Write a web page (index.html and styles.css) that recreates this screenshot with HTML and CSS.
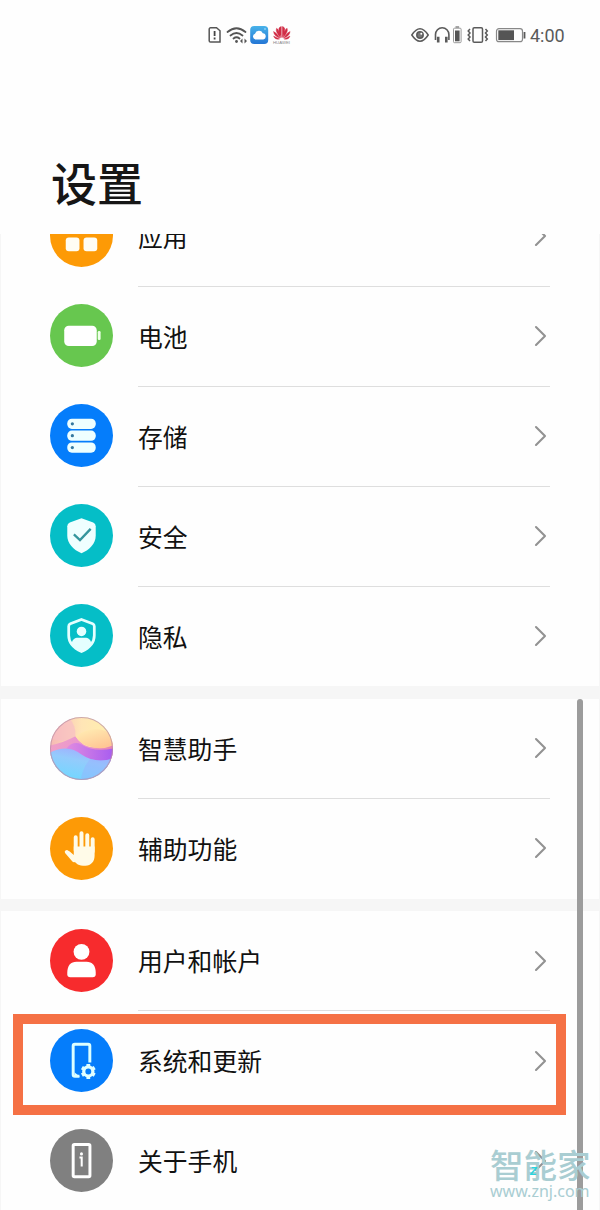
FILE: index.html
```html
<!DOCTYPE html>
<html lang="zh-CN">
<head>
<meta charset="utf-8">
<title>设置</title>
<link rel="stylesheet" href="styles.css">
</head>
<body>
<div class="phone">
  <header class="status">
    <div class="status-left">
      <svg width="84" height="22" viewBox="0 0 84 22">
        <defs><linearGradient id="cloud" x1="0" y1="0" x2="0" y2="1"><stop offset="0" stop-color="#48b2e9"/><stop offset="1" stop-color="#2476d5"/></linearGradient></defs>
        <path d="M3.500 3.800h6l3.500 3v11.200h-9.500a1.300 1.300 0 0 1-1.300-1.300V5.100a1.300 1.300 0 0 1 1.300-1.300z" fill="none" stroke="#555" stroke-width="1.500"/>
        <path d="M7.600 7v5M7.600 13.500v2" stroke="#444" stroke-width="1.800"/>
        <g fill="none" stroke="#555" stroke-width="1.700" stroke-linecap="round"><path d="M20.500 8q9-7.500 18 0M23.500 11.500q6-5 12 0M26.500 14.500q3-2.500 6 0"/></g>
        <circle cx="29.500" cy="17.500" r="1.400" fill="#555"/><path d="M35.500 14.500v5l-2.500-2.500zM37.500 14.500v5l2.500-2.500z" fill="#555"/>
        <rect x="43.200" y="2" width="18" height="18" rx="4" fill="url(#cloud)"/>
        <path d="M48.500 15.500a3 3 0 0 1-.5-5.800 4.200 4.200 0 0 1 7.800-.5 3.200 3.200 0 0 1 .5 6.300z" fill="#fff"/><circle cx="58" cy="5" r=".8" fill="#bce8ff"/>
        <g fill="#d12d46" stroke="#d12d46" stroke-width=".4"><path d="M74.300 13.500Q71 7 72 4q1-1.300 2.300-1.500zM75.300 13.500Q78.600 7 77.600 4q-1-1.300-2.300-1.500zM73.500 13.700Q68 8 69.500 4.300 72 5 73.500 13.700zM76.100 13.700Q81.600 8 80.100 4.300 77.600 5 76.100 13.700zM73 14.200Q67 12 66.500 7.500 69.500 8.500 73 14.200zM76.600 14.200Q82.600 12 83.100 7.500 80.100 8.500 76.600 14.200zM72.500 15Q68 16 66.600 12zM77.100 15q4.500 1 5.900-3z"/></g>
        <text x="66" y="20" font-size="4.300" textLength="17" class="tiny">HUAWEI</text>
      </svg>
    </div>
    <div class="status-right">
      <svg width="118" height="22" viewBox="0 0 118 22" fill="none" stroke="#5a5a5a" stroke-width="1.500">
        <path d="M1.800 11q8.200-12.500 16.400 0-8.200 12.500-16.400 0z"/><circle cx="10" cy="11" r="3.200" fill="#777"/><circle cx="11.300" cy="9.700" r="1" fill="#fff" stroke="none"/>
        <path d="M25.500 16V10.500a6.700 6.700 0 0 1 13.400 0V16" stroke-width="1.600"/><path d="M28.200 12.800v5.700M36.300 12.800v5.700" stroke-width="2.600"/>
        <rect x="43.500" y="4.200" width="7.600" height="14.500" rx="1" stroke="#999" stroke-width="1"/><path d="M45.500 3h3.600" stroke="#888"/><path d="M45 6.500h4.600v10.800H45z" fill="#555" stroke="none"/>
        <rect x="63" y="3.700" width="9.500" height="14.600" rx="1.300"/><path d="M60 5l-1.800 2 1.800 2-1.800 2 1.800 2-1.800 2 1.800 2M75.500 5l1.800 2-1.800 2 1.800 2-1.800 2 1.800 2-1.800 2" stroke-width="1.500"/>
        <rect x="86.500" y="4.700" width="26" height="13" rx="2.500" stroke="#888" stroke-width="1.200"/><path d="M88.300 6.300H104v9.800H88.300z" fill="#555" stroke="none"/><path d="M114.500 8v6.500" stroke-width="1.800"/>
      </svg>
      <span class="clock">4:00</span>
    </div>
  </header>
  <h1 class="title">设置</h1>

  <svg class="defs" width="0" height="0"><defs>
    <symbol id="chev" viewBox="0 0 14 22"><path d="M2 2l9 9-9 9" fill="none" stroke="#929292" stroke-width="2.100" stroke-linecap="round" stroke-linejoin="round"/></symbol>
  </defs></svg>

  <main class="list">
    <section class="group first">
      <div class="row"><svg class="icon" viewBox="0 0 62 62"><circle cx="31" cy="31" r="31" fill="#fd9a06"/><g fill="#fffdf4"><rect x="15.500" y="15" width="13.500" height="13.500" rx="3"/><rect x="33" y="15" width="13.500" height="13.500" rx="3"/><rect x="15.500" y="33" width="13.500" height="13.500" rx="3"/><rect x="33" y="33" width="13.500" height="13.500" rx="3"/></g></svg><div class="body"><span>应用</span><svg class="chev"><use href="#chev"/></svg></div></div>
      <div class="row"><svg class="icon" viewBox="0 0 62 62"><circle cx="31" cy="31" r="31" fill="#67c74f"/><rect x="14" y="21.300" width="32" height="20" rx="4.500" fill="#fff"/><rect x="47" y="26.500" width="2.800" height="9" rx="1.200" fill="#efffe9"/></svg><div class="body"><span>电池</span><svg class="chev"><use href="#chev"/></svg></div></div>
      <div class="row"><svg class="icon" viewBox="0 0 62 62"><circle cx="31" cy="31" r="31" fill="#057dfb"/><g fill="#eeffff"><rect x="17" y="14.500" width="28" height="10" rx="4.500"/><rect x="17" y="26.200" width="28" height="10" rx="4.500"/><rect x="17" y="37.900" width="28" height="10" rx="4.500"/></g><g fill="#34799f"><circle cx="22" cy="19.500" r="1.600"/><circle cx="22" cy="31.200" r="1.600"/><circle cx="22" cy="42.900" r="1.600"/></g></svg><div class="body"><span>存储</span><svg class="chev"><use href="#chev"/></svg></div></div>
      <div class="row"><svg class="icon" viewBox="0 0 62 62"><circle cx="31" cy="31" r="31" fill="#05bec7"/><path d="M31 14l11.500 4.300Q45 19.300 45 22v9c0 8-6 14-14 17.500C23 45 17 39 17 31v-9q0-2.700 2.500-3.700z" fill="#efffff"/><path d="M23.500 30l6 5.500L40 24.500" fill="none" stroke="#35969d" stroke-width="2.300"/></svg><div class="body"><span>安全</span><svg class="chev"><use href="#chev"/></svg></div></div>
      <div class="row"><svg class="icon" viewBox="0 0 62 62"><circle cx="31" cy="31" r="31" fill="#05bec7"/><path d="M31 15.300l11 4.200q1.600.7 1.600 2.500v9c0 7.500-5.500 12.600-12.600 15.800-7.100-3.200-12.600-8.300-12.600-15.800v-9q0-1.800 1.600-2.500z" fill="none" stroke="#e4ffff" stroke-width="2.700"/><circle cx="31" cy="27" r="4.700" fill="#e4ffff"/><path d="M21.500 39c0-4 3-5.800 6-5.800h7c3 0 6 1.800 6 5.800-2.500 4-5.500 6-9.500 7.500-4-1.500-7-3.500-9.500-7.500z" fill="#e4ffff"/></svg><div class="body"><span>隐私</span><svg class="chev"><use href="#chev"/></svg></div></div>
    </section>
    <section class="group">
      <div class="row"><svg class="icon" viewBox="0 0 62 62">
        <defs><clipPath id="orb"><circle cx="31" cy="31" r="31"/></clipPath>
        <linearGradient id="o1"><stop offset="0" stop-color="#f6b9b5"/><stop offset=".5" stop-color="#ffe5b6"/><stop offset="1" stop-color="#fff1ac"/></linearGradient>
        <linearGradient id="o2" x1="0" y1="0" x2=".6" y2="1"><stop offset="0" stop-color="#ffefb5"/><stop offset="1" stop-color="#ffc795"/></linearGradient>
        <linearGradient id="o3"><stop offset="0" stop-color="#efa0c6"/><stop offset=".5" stop-color="#ea96cf"/><stop offset="1" stop-color="#e583b4"/></linearGradient>
        <linearGradient id="o5"><stop offset="0" stop-color="#e08be0"/><stop offset="1" stop-color="#a85df0"/></linearGradient>
        <linearGradient id="o4" x1=".3" y1="1" x2=".7" y2="0"><stop offset="0" stop-color="#70d8ff"/><stop offset=".6" stop-color="#94cbfc"/><stop offset="1" stop-color="#a4a8ff"/></linearGradient></defs>
        <g clip-path="url(#orb)"><path fill="url(#o1)" d="M0 0h62v62H0z"/><path d="M0 0h18q8 8 7 19-10 8-25 2z" fill="#f8bdc6" opacity=".65"/><path d="M0 28q12-2 25-9 7 11 19 11 12 0 18-5v37H0z" fill="url(#o3)"/><path d="M25 19Q43 6 62 17v11q-10 4-19 2-13-2-18-11z" fill="url(#o2)"/><path d="M16 31q7-8 15-4 12 8 31 4v15H35z" fill="url(#o5)"/><path d="M0 35q18-9 31 2 13 9 31 4v21H0z" fill="url(#o4)"/><path d="M30 62q3-14 10-21 11 3 22 0v21z" fill="#9caaff" opacity=".35"/></g><circle cx="31" cy="31" r="30.500" fill="none" stroke="#b88fa5" stroke-opacity=".7"/></svg><div class="body"><span>智慧助手</span><svg class="chev"><use href="#chev"/></svg></div></div>
      <div class="row"><svg class="icon" viewBox="0 0 62 62"><circle cx="31" cy="31" r="31" fill="#fd9a06"/><g fill="none" stroke="#fffbe8" stroke-width="3.900" stroke-linecap="round"><path d="M25.300 33V20M31 31V16M36.700 31V18M42 34V22M16.500 34.500l7 8"/></g><path d="M23.400 29h20.500v9c0 6-3.500 10-9 10-7 0-9-2-12-5.500L15.200 34.500q2-2.500 4.500-.2l3.700 3z" fill="#fffbe8"/></svg><div class="body"><span>辅助功能</span><svg class="chev"><use href="#chev"/></svg></div></div>
    </section>
    <section class="group last">
      <div class="row"><svg class="icon" viewBox="0 0 62 62"><circle cx="31" cy="31" r="31" fill="#f72b2d"/><circle cx="31" cy="22.500" r="7.800" fill="#fff"/><path d="M17 43c0-7 3.500-10.800 9-10.800h10c5.500 0 9 3.800 9 10.800v1.500q0 3-3 3H20q-3 0-3-3z" fill="#fff"/></svg><div class="body"><span>用户和帐户</span><svg class="chev"><use href="#chev"/></svg></div></div>
      <div class="row"><svg class="icon" viewBox="0 0 62 62"><circle cx="31" cy="31" r="31" fill="#057dfb"/><path d="M29 46.500h-4.500q-1.700 0-1.700-1.700v-28q0-1.700 1.700-1.700h13q1.700 0 1.700 1.700V33" fill="none" stroke="#dcffff" stroke-width="2.900"/><path d="M24 42.500l5.500 4.500h-5z" fill="#dcffff"/><circle cx="37.700" cy="41.800" r="4.500" fill="none" stroke="#e1ffff" stroke-width="3.200"/><path d="M37.700 36.500v-2M37.700 47.100v2M33.100 39.100l-1.700-1M42.300 44.500l1.700 1M33.100 44.500l-1.700 1M42.300 39.100l1.700-1" stroke="#e1ffff" stroke-width="3.700"/></svg><div class="body"><span>系统和更新</span><svg class="chev"><use href="#chev"/></svg></div></div>
      <div class="row"><svg class="icon" viewBox="0 0 62 62"><circle cx="31" cy="31" r="31" fill="#808080"/><rect x="22.800" y="15.300" width="16.500" height="31.700" rx="1.200" fill="none" stroke="#fff" stroke-width="2.900"/><circle cx="31" cy="24.500" r="1.500" fill="#fff"/><path d="M29 28h2.200v9" fill="none" stroke="#fff" stroke-width="2"/></svg><div class="body"><span>关于手机</span><svg class="chev"><use href="#chev"/></svg></div></div>
    </section>
  </main>
  <div class="scrollbar"></div>
  <div class="highlight"></div>
  <div class="watermark"><b>智能家</b><span>www.znj.com</span><i>Z</i></div>
</div>
</body>
</html>
```
FILE: styles.css
```css
* { box-sizing: border-box; }
body { margin: 0; background: #fefefe; color: #111; font-family: "Noto Sans CJK SC", sans-serif; }
.phone { position: relative; width: 600px; height: 1210px; overflow: hidden; display: flex; flex-direction: column; }
.status { height: 70px; padding: 24px 35px 0 207px; display: flex; justify-content: space-between; align-items: flex-start; }
.status-left svg, .status-right svg { display: block; }
.status-right { display: flex; gap: 2px; }
.clock { width: 35px; font: 18px/23px Roboto, sans-serif; color: #5a5a5a; white-space: nowrap; }
.tiny { font-family: "Liberation Sans", sans-serif; fill: #888; }
.title { margin: 0; height: 164px; padding: 78px 0 0 51px; font-size: 46px; line-height: 66px; font-weight: 500; color: #161616; }
.defs { position: absolute; }
.list { flex: 1; min-height: 0; overflow: hidden; background: #f6f6f6; display: flex; flex-direction: column; gap: 12.5px; }
.group { flex: none; background: #fefefe; border-left: 1px solid #f6f6f6; border-right: 1px solid #f6f6f6; }
.first { margin-top: -48px; }
.row { height: 100px; padding: 0 49px; display: flex; align-items: center; gap: 25px; }
.icon { width: 63px; height: 63px; flex: none; margin-top: -1px; }
.body { flex: 1; height: 100px; display: flex; align-items: center; justify-content: space-between; border-bottom: 1px solid #dedede; font-size: 24.8px; line-height: 36px; padding-right: 2px; }
.body span { margin-top: -1px; }
.first .body { height: 101px; margin-bottom: -1px; }
.row:last-child .body { border-bottom-color: transparent; }
.last .row:nth-child(2) .body { border-bottom-color: transparent; }
.chev { width: 14px; height: 22px; }
.scrollbar { position: absolute; left: 577px; top: 699px; width: 6px; height: 511px; border-radius: 3px 3px 0 0; background: #9c9c9c; }
.highlight { position: absolute; left: 13px; top: 1014px; width: 553px; height: 101px; border: 10px solid #f57145; }
.watermark { position: absolute; left: 490px; top: 1146px; width: 102px; color: #a9cdd2; }
.watermark b { display: block; font-size: 33.5px; line-height: 36px; font-weight: 500; white-space: nowrap; }
.watermark span { display: block; font: 16px/18px "Noto Sans", sans-serif; white-space: nowrap; }
.watermark i { position: absolute; left: 40px; top: 19px; font: italic bold 11px/12px "Liberation Sans", sans-serif; color: #28d4df; }
```
